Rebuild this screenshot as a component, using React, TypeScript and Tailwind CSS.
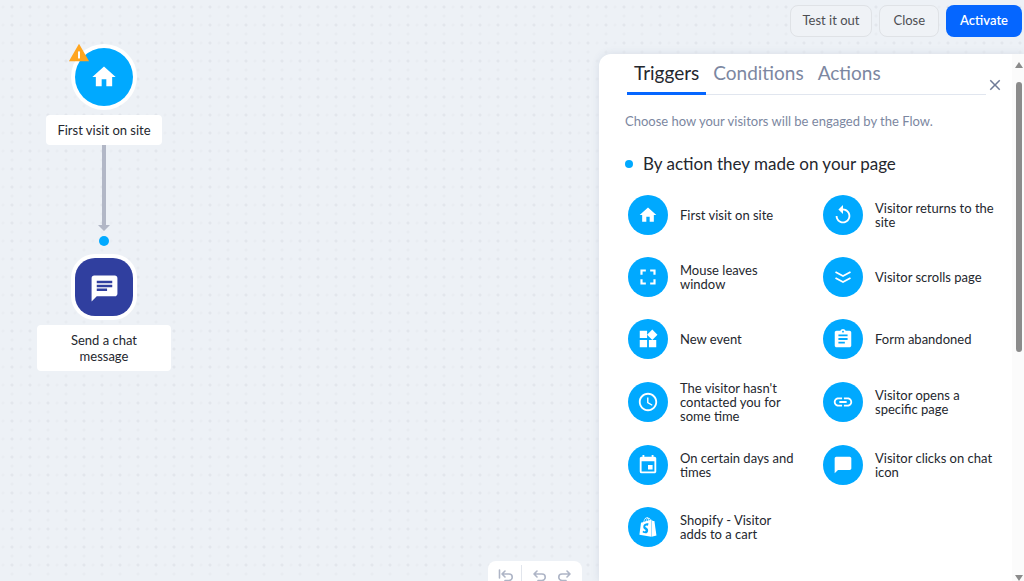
import { useState } from "react"
import {
  MdAccessTime,
  MdAssignment,
  MdChat,
  MdChatBubble,
  MdClose,
  MdEvent,
  MdFullscreen,
  MdHome,
  MdLink,
  MdReplay,
  MdWarning,
  MdWidgets,
} from "react-icons/md"
import { FaShopify } from "react-icons/fa"

const DoubleChevron = () => (
  <svg viewBox="0 0 18 16" className="w-[18px] h-4" fill="none" stroke="currentColor" strokeWidth="1.8">
    <path d="M1.5 3 L9 7 L16.5 3 M1.5 9 L9 13 L16.5 9" />
  </svg>
)

const triggers = [
  { label: "First visit on site", icon: <MdHome className="w-5 h-5" /> },
  { label: "Visitor returns to the site", icon: <MdReplay className="w-[22px] h-[22px]" /> },
  { label: "Mouse leaves window", icon: <MdFullscreen className="w-[26px] h-[26px]" /> },
  { label: "Visitor scrolls page", icon: <DoubleChevron /> },
  { label: "New event", icon: <MdWidgets className="w-[22px] h-[22px]" /> },
  { label: "Form abandoned", icon: <MdAssignment className="w-[22px] h-[22px]" /> },
  { label: "The visitor hasn't contacted you for some time", icon: <MdAccessTime className="w-[22px] h-[22px]" /> },
  { label: "Visitor opens a specific page", icon: <MdLink className="w-[22px] h-[22px]" /> },
  { label: "On certain days and times", icon: <MdEvent className="w-[22px] h-[22px]" /> },
  { label: "Visitor clicks on chat icon", icon: <MdChatBubble className="w-5 h-5" /> },
  { label: "Shopify - Visitor adds to a cart", icon: <FaShopify className="w-5 h-5" /> },
]

const tabs = ["Triggers", "Conditions", "Actions"]

const iconStroke = {
  fill: "none",
  stroke: "currentColor",
  strokeWidth: 1.6,
  strokeLinecap: "round" as const,
  strokeLinejoin: "round" as const,
}

export default function App() {
  const [activeTab, setActiveTab] = useState("Triggers")

  return (
    <div className="h-screen flex overflow-hidden bg-[#edf1f6] bg-[radial-gradient(circle_at_12px_7px,#e2e6ec_1px,transparent_2px),radial-gradient(circle_at_3px_7px,#e9edf2_1px,transparent_2px),radial-gradient(circle_at_12px_16px,#e8ecf1_1px,transparent_2px)] bg-[length:18px_18px] font-['Lato',sans-serif] text-[#24272e]">
      {/* Canvas */}
      <main className="flex-1 min-w-0 flex flex-col justify-between">
        <div className="ml-[37px] mt-11 w-[134px] flex flex-col items-center text-[13px] leading-4">
          <div className="relative w-[66px] h-[66px] rounded-full bg-white p-1">
            <div className="w-full h-full rounded-full bg-[#00a9ff] text-white flex items-center justify-center">
              <MdHome className="w-7 h-7" />
            </div>
            <MdWarning className="absolute -left-[3px] -top-0.5 w-[22px] h-[22px] text-[#ffa51f]" />
            <span className="absolute left-[7px] top-2 w-0.5 h-1.5 bg-white" />
          </div>
          <div className="mt-[5px] bg-white rounded px-[11px] py-[7px] whitespace-nowrap">First visit on site</div>
          <svg viewBox="0 0 12 86" className="w-3 h-[86px]" fill="#b2b7c6">
            <path d="M4 0 H8 V80 H12 L6 86 L0 80 H4 Z" />
          </svg>
          <div className="mt-[5px] w-2.5 h-2.5 rounded-full bg-[#00a9ff]" />
          <div className="mt-2 w-[66px] h-[66px] rounded-3xl bg-white p-1">
            <div className="w-full h-full pt-0.5 rounded-[20px] bg-[#303f9f] text-white flex items-center justify-center">
              <MdChat className="w-[31px] h-[31px]" />
            </div>
          </div>
          <div className="mt-[5px] w-full bg-white rounded px-6 py-[7px] text-center">Send a chat message</div>
        </div>

        <div className="self-end mr-[17px] h-5 flex items-start px-2 pt-1 bg-white rounded-t-lg text-[#aeb5c6]">
          <button aria-label="Reset" className="w-[25px] h-5 pl-0.5">
            <svg viewBox="0 0 16 18" className="w-4 h-[18px]" {...iconStroke}>
              <path d="M1.5 4 V12 M7 5 L4 8 L7 11 M4 8 H11 A3 3 0 0 1 11 14.5 H7" />
            </svg>
          </button>
          <span className="w-px h-5 bg-[#e1e5ec]" />
          <button aria-label="Undo" className="w-[26px] h-5 pl-2.5">
            <svg viewBox="0 0 16 18" className="w-4 h-[18px]" {...iconStroke}>
              <path d="M5 5 L2 8 L5 11 M2 8 H10 A3 3 0 0 1 10 14.5 H6" />
            </svg>
          </button>
          <button aria-label="Redo" className="w-[26px] h-5 pl-2">
            <svg viewBox="0 0 16 18" className="w-4 h-[18px]" {...iconStroke}>
              <path d="M11 5 L14 8 L11 11 M14 8 H6 A3 3 0 0 0 6 14.5 H10" />
            </svg>
          </button>
        </div>
      </main>

      <div className="w-[425px] shrink-0 flex flex-col">
        {/* Actions */}
        <header className="flex justify-end gap-[7px] pt-[5px] pr-0.5 pb-[17px] text-[13px] text-[#4d4e52]">
          <button className="h-8 px-3 rounded-lg border border-[#dfe2e6] bg-[#eff2f6]">Test it out</button>
          <button className="h-8 px-[13px] rounded-lg border border-[#dfe2e6] bg-[#eff2f6]">Close</button>
          <button className="h-8 px-3.5 rounded-lg bg-[#0566ff] text-white font-semibold">Activate</button>
        </header>

        {/* Side panel */}
        <aside className="flex-1 min-h-0 flex bg-white rounded-tl-xl overflow-hidden shadow-[0_0_8px_rgba(60,80,120,0.12)]">
          <div className="flex-1 min-w-0 pl-[26px]">
            <div className="flex items-start pl-0.5 pr-2">
              <nav className="flex-1 h-[41px] flex border-b border-[#e1e6ef] text-[19px]">
                {tabs.map(tab => (
                  <button
                    key={tab}
                    onClick={() => setActiveTab(tab)}
                    className={`h-[41px] px-[7px] border-b-[3px] ${activeTab === tab ? "border-[#0566ff]" : "border-transparent text-[#7c87a1]"}`}
                  >
                    {tab}
                  </button>
                ))}
              </nav>
              <button aria-label="Close panel" className="mt-[22px] text-[#6f7b98]">
                <MdClose className="w-[18px] h-[18px]" />
              </button>
            </div>

            <p className="mt-[18px] text-[13px] leading-4 text-[#7c87a1]">
              Choose how your visitors will be engaged by the Flow.
            </p>

            <h2 className="mt-[23px] flex items-center gap-2.5 text-[17px] leading-6">
              <span className="w-2 h-2 rounded-full bg-[#00a9ff]" />
              By action they made on your page
            </h2>

            <div className="mt-[19px] ml-[3px] grid grid-cols-2 gap-x-1.5 gap-y-[22px]">
              {triggers.map(({ label, icon }) => (
                <button key={label} className="flex items-center gap-3 text-left">
                  <span className="w-10 h-10 shrink-0 rounded-full bg-[#00a9ff] text-white flex items-center justify-center">
                    {icon}
                  </span>
                  <span className="w-[120px] text-[13px] leading-[14px]">{label}</span>
                </button>
              ))}
            </div>
          </div>

          {/* Scroll track */}
          <div className="w-3 shrink-0 flex flex-col items-center bg-[#fbfbfb] pt-2 pl-0.5">
            <svg viewBox="0 0 8 6" className="w-2 h-1.5" fill="#8b8b8b">
              <path d="M4 0 L8 6 H0 Z" />
            </svg>
            <div className="mt-3.5 w-1.5 h-[52%] rounded-full bg-[#8b8b8b]" />
            <svg viewBox="0 0 8 6" className="mt-auto w-2 h-1.5" fill="#8b8b8b">
              <path d="M0 0 H8 L4 6 Z" />
            </svg>
          </div>
        </aside>
      </div>
    </div>
  )
}
